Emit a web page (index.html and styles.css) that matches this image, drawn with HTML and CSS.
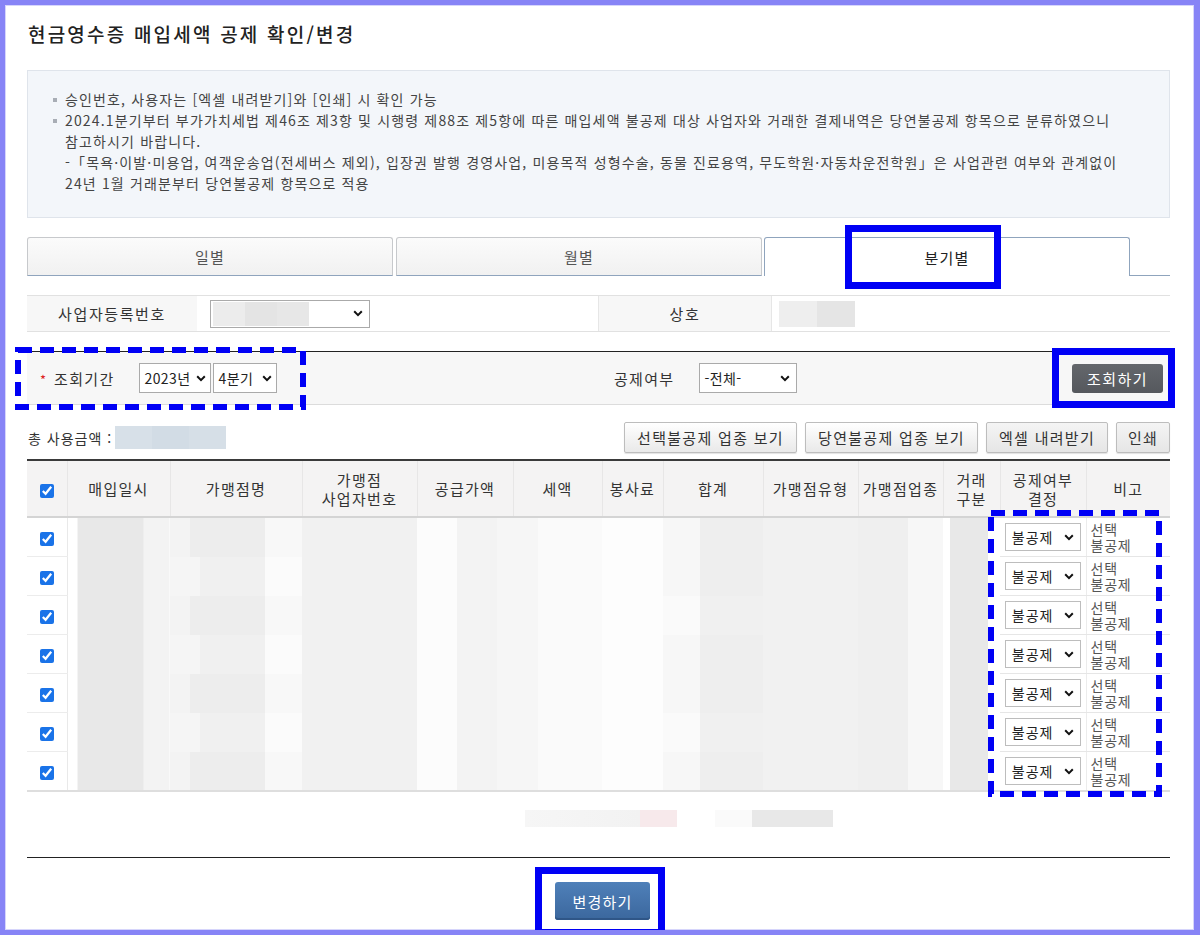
FILE: index.html
```html
<!DOCTYPE html>
<html lang="ko">
<head>
<meta charset="utf-8">
<title>현금영수증 매입세액 공제 확인/변경</title>
<link rel="stylesheet" href="styles.css">
</head>
<body>
<div class="frame">
  <h1 class="title">현금영수증 매입세액 공제 확인/변경</h1>

  <div class="notice">
    <ul>
      <li>승인번호, 사용자는 [엑셀 내려받기]와 [인쇄] 시 확인 가능</li>
      <li>2024.1분기부터 부가가치세법 제46조 제3항 및 시행령 제88조 제5항에 따른 매입세액 불공제 대상 사업자와 거래한 결제내역은 당연불공제 항목으로 분류하였으니<br>참고하시기 바랍니다.<br>-「목욕·이발·미용업, 여객운송업(전세버스 제외), 입장권 발행 경영사업, 미용목적 성형수술, 동물 진료용역, 무도학원·자동차운전학원」은 사업관련 여부와 관계없이<br>24년 1월 거래분부터 당연불공제 항목으로 적용</li>
    </ul>
  </div>

  <div class="tabs">
    <div class="tab">일별</div>
    <div class="tab">월별</div>
    <div class="tab active">분기별</div>
    <div class="tab-rest"></div>
  </div>

  <div class="biz">
    <div class="lbl">사업자등록번호</div>
    <div class="val">
      <span class="sel sel-biz"><span class="blur-sel"><i></i><i></i><i></i></span><svg class="chev" width="10" height="7" viewBox="0 0 10 7"><path d="M1.2 1.3 5 5.1 8.8 1.3" fill="none" stroke="#111" stroke-width="2"/></svg></span>
    </div>
    <div class="lbl lbl-mid">상호</div>
    <div class="val"><span class="blur-name"><i></i><i></i></span></div>
  </div>

  <div class="search">
    <div class="s-left">
      <span class="req">*</span><span class="s-label">조회기간</span>
      <span class="sel sel-year"><span>2023년</span><svg class="chev" width="10" height="7" viewBox="0 0 10 7"><path d="M1.2 1.3 5 5.1 8.8 1.3" fill="none" stroke="#111" stroke-width="2"/></svg></span>
      <span class="sel sel-q"><span>4분기</span><svg class="chev" width="10" height="7" viewBox="0 0 10 7"><path d="M1.2 1.3 5 5.1 8.8 1.3" fill="none" stroke="#111" stroke-width="2"/></svg></span>
    </div>
    <div class="s-mid">
      <span class="s-label2">공제여부</span>
      <span class="sel sel-ded"><span>-전체-</span><svg class="chev" width="10" height="7" viewBox="0 0 10 7"><path d="M1.2 1.3 5 5.1 8.8 1.3" fill="none" stroke="#111" stroke-width="2"/></svg></span>
    </div>
    <button class="btn-search">조회하기</button>
  </div>

  <div class="toolbar">
    <div class="total">총 사용금액 : <span class="blur-total"><i></i><i></i><i></i></span></div>
    <div class="tb-btns">
      <button class="btn btn-a">선택불공제 업종 보기</button>
      <button class="btn btn-b">당연불공제 업종 보기</button>
      <button class="btn btn-c">엑셀 내려받기</button>
      <button class="btn btn-d">인쇄</button>
    </div>
  </div>

  <table class="grid">
    <colgroup>
      <col class="w40"><col class="w103"><col class="w132"><col class="w115"><col class="w96"><col class="w89"><col class="w61"><col class="w100"><col class="w95"><col class="w85"><col class="w57"><col class="w86"><col class="w84">
    </colgroup>
    <thead>
      <tr>
        <th><input type="checkbox" checked></th>
        <th>매입일시</th>
        <th>가맹점명</th>
        <th>가맹점<br>사업자번호</th>
        <th>공급가액</th>
        <th>세액</th>
        <th>봉사료</th>
        <th>합계</th>
        <th>가맹점유형</th>
        <th>가맹점업종</th>
        <th>거래<br>구분</th>
        <th>공제여부<br>결정</th>
        <th>비고</th>
      </tr>
    </thead>
    <tbody>
      <tr><td class="ck"><input type="checkbox" checked></td><td class="d"></td><td class="d"></td><td class="d"></td><td class="d"></td><td class="d"></td><td class="d"></td><td class="d"></td><td class="d"></td><td class="d"></td><td class="d"></td><td class="dec"><span class="sel sel-row"><span>불공제</span><svg class="chev" width="10" height="7" viewBox="0 0 10 7"><path d="M1.2 1.3 5 5.1 8.8 1.3" fill="none" stroke="#111" stroke-width="2"/></svg></span></td><td class="note"><span class="nl">선택</span><span class="nl">불공제</span></td></tr>
      <tr><td class="ck"><input type="checkbox" checked></td><td class="d"></td><td class="d"></td><td class="d"></td><td class="d"></td><td class="d"></td><td class="d"></td><td class="d"></td><td class="d"></td><td class="d"></td><td class="d"></td><td class="dec"><span class="sel sel-row"><span>불공제</span><svg class="chev" width="10" height="7" viewBox="0 0 10 7"><path d="M1.2 1.3 5 5.1 8.8 1.3" fill="none" stroke="#111" stroke-width="2"/></svg></span></td><td class="note"><span class="nl">선택</span><span class="nl">불공제</span></td></tr>
      <tr><td class="ck"><input type="checkbox" checked></td><td class="d"></td><td class="d"></td><td class="d"></td><td class="d"></td><td class="d"></td><td class="d"></td><td class="d"></td><td class="d"></td><td class="d"></td><td class="d"></td><td class="dec"><span class="sel sel-row"><span>불공제</span><svg class="chev" width="10" height="7" viewBox="0 0 10 7"><path d="M1.2 1.3 5 5.1 8.8 1.3" fill="none" stroke="#111" stroke-width="2"/></svg></span></td><td class="note"><span class="nl">선택</span><span class="nl">불공제</span></td></tr>
      <tr><td class="ck"><input type="checkbox" checked></td><td class="d"></td><td class="d"></td><td class="d"></td><td class="d"></td><td class="d"></td><td class="d"></td><td class="d"></td><td class="d"></td><td class="d"></td><td class="d"></td><td class="dec"><span class="sel sel-row"><span>불공제</span><svg class="chev" width="10" height="7" viewBox="0 0 10 7"><path d="M1.2 1.3 5 5.1 8.8 1.3" fill="none" stroke="#111" stroke-width="2"/></svg></span></td><td class="note"><span class="nl">선택</span><span class="nl">불공제</span></td></tr>
      <tr><td class="ck"><input type="checkbox" checked></td><td class="d"></td><td class="d"></td><td class="d"></td><td class="d"></td><td class="d"></td><td class="d"></td><td class="d"></td><td class="d"></td><td class="d"></td><td class="d"></td><td class="dec"><span class="sel sel-row"><span>불공제</span><svg class="chev" width="10" height="7" viewBox="0 0 10 7"><path d="M1.2 1.3 5 5.1 8.8 1.3" fill="none" stroke="#111" stroke-width="2"/></svg></span></td><td class="note"><span class="nl">선택</span><span class="nl">불공제</span></td></tr>
      <tr><td class="ck"><input type="checkbox" checked></td><td class="d"></td><td class="d"></td><td class="d"></td><td class="d"></td><td class="d"></td><td class="d"></td><td class="d"></td><td class="d"></td><td class="d"></td><td class="d"></td><td class="dec"><span class="sel sel-row"><span>불공제</span><svg class="chev" width="10" height="7" viewBox="0 0 10 7"><path d="M1.2 1.3 5 5.1 8.8 1.3" fill="none" stroke="#111" stroke-width="2"/></svg></span></td><td class="note"><span class="nl">선택</span><span class="nl">불공제</span></td></tr>
      <tr><td class="ck"><input type="checkbox" checked></td><td class="d"></td><td class="d"></td><td class="d"></td><td class="d"></td><td class="d"></td><td class="d"></td><td class="d"></td><td class="d"></td><td class="d"></td><td class="d"></td><td class="dec"><span class="sel sel-row"><span>불공제</span><svg class="chev" width="10" height="7" viewBox="0 0 10 7"><path d="M1.2 1.3 5 5.1 8.8 1.3" fill="none" stroke="#111" stroke-width="2"/></svg></span></td><td class="note"><span class="nl">선택</span><span class="nl">불공제</span></td></tr>
    </tbody>
  </table>

  <div class="sum-blur"><span class="sb1"></span><span class="sb2"></span><span class="sb3"></span><span class="sb4"></span></div>

  <div class="bottom">
    <button class="btn-change">변경하기</button>
  </div>

  <svg class="anno" width="1189" height="925" viewBox="5 5 1189 925">
    <rect x="848.5" y="228.5" width="149" height="57" fill="none" stroke="#0000f5" stroke-width="7"/>
    <rect x="18" y="350" width="285" height="57" fill="none" stroke="#0000f5" stroke-width="6" stroke-dasharray="14 8"/>
    <rect x="1055.5" y="351.5" width="116" height="53" fill="none" stroke="#0000f5" stroke-width="7"/>
    <rect x="991" y="513" width="168" height="281" fill="none" stroke="#0000f5" stroke-width="6" stroke-dasharray="14 8"/>
    <rect x="538.5" y="870.5" width="123" height="62" fill="none" stroke="#0000f5" stroke-width="7"/>
  </svg>
</div>
</body>
</html>
```
FILE: styles.css
```css
html, body {
  margin: 0;
  padding: 0;
  background: #fff;
}
body {
  font-family: "Noto Sans CJK KR", "Malgun Gothic", "Noto Sans", sans-serif;
  color: #333;
  font-size: 14px;
}
.frame {
  position: relative;
  width: 1200px;
  height: 935px;
  box-sizing: border-box;
  border: 5px solid #8784f6;
  border-right-width: 6px;
  padding: 0 24px 0 22px;
  box-shadow: inset 0 0 0 1px #d6d5fb;
  overflow: hidden;
}
.title {
  margin: 16px 0 0 1px;
  font-size: 19px;
  line-height: 26px;
  font-weight: 500;
  color: #222;
  letter-spacing: 2.2px;
}

/* notice */
.notice {
  margin-top: 23px;
  height: 148px;
  box-sizing: border-box;
  background: #f3f6fa;
  border: 1px solid #dfe4eb;
  padding: 18px 20px 0 24px;
}
.notice ul {
  margin: 0;
  padding: 0;
  list-style: none;
}
.notice li {
  position: relative;
  padding-left: 13px;
  font-size: 14px;
  line-height: 21px;
  color: #444;
  letter-spacing: 1.15px;
}
.notice li::before {
  content: "";
  position: absolute;
  left: 1px;
  top: 9px;
  width: 4px;
  height: 4px;
  background: #a8adb5;
}

/* tabs */
.tabs {
  display: flex;
  margin-top: 19px;
  height: 39px;
}
.tab {
  flex: 0 0 366px;
  box-sizing: border-box;
  border: 1px solid #c7c9cc;
  border-bottom-color: #8fa4bd;
  border-radius: 3px 3px 0 0;
  background: linear-gradient(#fbfbfb, #f1f1f1);
  color: #555;
  font-size: 15px;
  letter-spacing: 1.2px;
  display: flex;
  align-items: center;
  justify-content: center;
  margin-right: 3px;
}
.tab:nth-child(2) { margin-right: 2px; }
.tab.active {
  background: #fff;
  border-color: #8fa4bd;
  border-bottom: none;
  color: #222;
  margin-right: 0;
}
.tab-rest {
  flex: 1;
  border-bottom: 1px solid #8fa4bd;
}

/* business row */
.biz {
  margin-top: 19px;
  display: grid;
  grid-template-columns: 170px 401px 174px 1fr;
  height: 37px;
  box-sizing: border-box;
  border-top: 1px solid #e1e1e1;
  border-bottom: 1px solid #e1e1e1;
}
.lbl {
  background: #f7f7f7;
  display: flex;
  align-items: center;
  justify-content: center;
  font-size: 15px;
  letter-spacing: 1.6px;
  color: #333;
}
.lbl-mid {
  border-left: 1px solid #e6e6e6;
  border-right: 1px solid #e6e6e6;
}
.val {
  display: flex;
  align-items: center;
  padding-left: 13px;
}
.biz .val:last-child { padding-left: 7px; }

/* fake select */
.sel {
  display: inline-flex;
  align-items: center;
  justify-content: space-between;
  box-sizing: border-box;
  height: 30px;
  border: 1px solid #aaa;
  background: #fff;
  padding: 0 6px 0 4px;
  font-size: 14px;
  color: #222;
  white-space: nowrap;
  letter-spacing: 0.4px;
}
.chev { flex: none; }
.sel-biz { width: 160px; height: 28px; padding-left: 2px; }
.blur-sel { display: flex; height: 24px; }
.blur-sel i { display: block; width: 32px; height: 24px; background: #e4e4e4; }
.blur-sel i:first-child { background: #ececec; }
.blur-sel i:last-child { background: #e7e7e7; }
.blur-name { display: flex; }
.blur-name i { display: block; width: 38px; height: 26px; background: #eeeeee; }
.blur-name i + i { background: #e5e5e5; }
.sel-year { width: 72px; margin-left: 25px; padding-left: 4px; padding-right: 4px; }
.sel-q { width: 64px; margin-left: 2px; padding-left: 4px; padding-right: 4px; }
.sel-ded { width: 98px; margin-left: 25px; }
.sel-row { width: 76px; height: 28px; padding-left: 6px; padding-right: 6px; border-color: #bdbdbd; letter-spacing: 1px; }

/* search */
.search {
  margin-top: 19px;
  height: 54px;
  box-sizing: border-box;
  border-top: 1px solid #222;
  border-bottom: 1px solid #dcdcdc;
  background: #f7f7f7;
  display: flex;
  align-items: center;
  padding: 0 7px 0 13px;
}
.s-left {
  width: 574px;
  display: flex;
  align-items: center;
}
.req {
  color: #d22;
  font-size: 13px;
  margin-right: 8px;
  position: relative;
  top: 1px;
}
.s-label, .s-label2 {
  font-size: 15px;
  letter-spacing: 1.3px;
  color: #333;
}
.s-mid {
  flex: 1;
  display: flex;
  align-items: center;
}
.btn-search {
  width: 91px;
  height: 29px;
  border: none;
  border-radius: 3px;
  background: linear-gradient(#64676c, #55585d);
  color: #fff;
  font-family: inherit;
  font-size: 15px;
  letter-spacing: 1.5px;
  padding: 0;
}

/* toolbar */
.toolbar {
  margin-top: 17px;
  display: flex;
  align-items: center;
  justify-content: space-between;
  height: 31px;
}
.total {
  display: flex;
  align-items: center;
  font-size: 14px;
  letter-spacing: 1px;
  color: #333;
  padding-left: 1px;
}
.blur-total { display: flex; margin-left: 3px; }
.blur-total i { display: block; width: 37px; height: 23px; background: #d7e0e8; }
.blur-total i:nth-child(2) { background: #d2dce5; }
.blur-total i:nth-child(3) { background: #d6dfe7; }
.tb-btns { display: flex; gap: 8px; }
.btn {
  height: 31px;
  box-sizing: border-box;
  border: 1px solid #bdbdbd;
  border-radius: 2px;
  background: linear-gradient(#ffffff, #e9e9e9);
  box-shadow: 0 1px 1px rgba(0,0,0,0.12);
  color: #333;
  font-family: inherit;
  font-size: 15px;
  letter-spacing: 1.3px;
  padding: 0;
}
.btn-a { width: 173px; }
.btn-b { width: 173px; }
.btn-c { width: 122px; background: linear-gradient(#f4f4f4, #e6e6e6); }
.btn-d { width: 54px; background: linear-gradient(#f4f4f4, #e6e6e6); }

/* grid */
.grid {
  margin-top: 6px;
  width: 100%;
  table-layout: fixed;
  border-collapse: collapse;
  border-top: 2px solid #3a3a3a;
  border-bottom: 2px solid #dedede;
}
.w40 { width: 40px; }
.w103 { width: 103px; }
.w132 { width: 132px; }
.w115 { width: 115px; }
.w96 { width: 96px; }
.w89 { width: 89px; }
.w61 { width: 61px; }
.w100 { width: 100px; }
.w95 { width: 95px; }
.w85 { width: 85px; }
.w57 { width: 57px; }
.w86 { width: 86px; }
.w84 { width: 84px; }
.grid th {
  height: 55px;
  background: #f4f3f3;
  border-left: 1px solid #e7e6e6;
  border-bottom: 2px solid #d4d4d4;
  font-weight: 400;
  font-size: 15px;
  letter-spacing: 1.3px;
  line-height: 19px;
  color: #333;
  padding: 0;
}
.grid th:first-child { border-left: none; }
.grid input[type="checkbox"] {
  width: 14px;
  height: 14px;
  margin: 0;
  accent-color: #1a73e8;
  vertical-align: middle;
}
.grid td {
  height: 38px;
  padding: 0;
  border-bottom: 1px solid #ececec;
}
.grid td.ck {
  text-align: center;
  border-right: 1px solid #e9e9e9;
}
.grid td.d { border-bottom-color: transparent; background: #f2f2f2; }
.grid td.d:nth-child(2) { background: linear-gradient(90deg, #fff 10px, #e8e8e8 10px, #e8e8e8 76px, #f3f3f3 76px); }
.grid td.d:nth-child(3) { background: linear-gradient(90deg, #f3f3f3 20px, #ededed 20px, #ededed 95px, #f8f8f8 95px); }
.grid td.d:nth-child(4) { background: #f1f1f1; }
.grid td.d:nth-child(5) { background: linear-gradient(90deg, #fcfcfc 40px, #f3f3f3 40px, #f3f3f3 80px, #f6f6f6 80px); }
.grid td.d:nth-child(6) { background: linear-gradient(90deg, #f6f6f6 25px, #fafafa 25px); }
.grid td.d:nth-child(7) { background: #fdfdfd; }
.grid td.d:nth-child(8) { background: linear-gradient(90deg, #f7f7f7 37px, #eeeeee 37px); }
.grid td.d:nth-child(9) { background: #f1f1f1; }
.grid td.d:nth-child(10) { background: linear-gradient(90deg, #efefef 50px, #f7f7f7 50px); }
.grid td.d:nth-child(11) { background: linear-gradient(90deg, #fff 7px, #e8e8e8 7px, #e8e8e8 45px, #fff 45px); }
.grid tbody tr:nth-child(even) td.d:nth-child(3) { background: linear-gradient(90deg, #f5f5f5 30px, #f0f0f0 30px, #f0f0f0 95px, #fbfbfb 95px); }
.grid tbody tr:nth-child(3n) td.d:nth-child(8) { background: linear-gradient(90deg, #fafafa 37px, #f0f0f0 37px); }
.grid td.dec {
  text-align: center;
  border-bottom-color: #e6e6e6;
}
.grid td.note {
  font-size: 14px;
  letter-spacing: 0.8px;
  color: #555;
  padding-left: 4px;
  border-left: 1px solid #ececec;
  border-bottom-color: #e6e6e6;
}
.nl {
  display: block;
  height: 16px;
  line-height: 16px;
}

/* summary blur */
.sum-blur {
  margin-top: 18px;
  padding-left: 498px;
  display: flex;
  height: 17px;
}
.sum-blur span { display: block; height: 17px; }
.sb1 { width: 115px; background: linear-gradient(90deg, #f6f6f6, #f2f2f2); }
.sb2 { width: 37px; background: #f7e9eb; }
.sb3 { width: 37px; margin-left: 38px; background: #fafafa; }
.sb4 { width: 81px; background: #e8e8e8; }

/* bottom */
.bottom {
  margin-top: 30px;
  border-top: 1px solid #222;
  display: flex;
  justify-content: center;
  padding-top: 24px;
}
.btn-change {
  width: 95px;
  height: 38px;
  border: none;
  border-radius: 3px;
  background: linear-gradient(#4f80b9, #3b679d);
  box-shadow: inset 0 -2px 0 #2f5687;
  color: #fff;
  font-family: inherit;
  font-size: 15px;
  letter-spacing: 1.2px;
  padding: 0;
  margin-left: 8px;
}

/* annotation overlay */
.anno {
  position: absolute;
  left: 0;
  top: 0;
  pointer-events: none;
}
```
